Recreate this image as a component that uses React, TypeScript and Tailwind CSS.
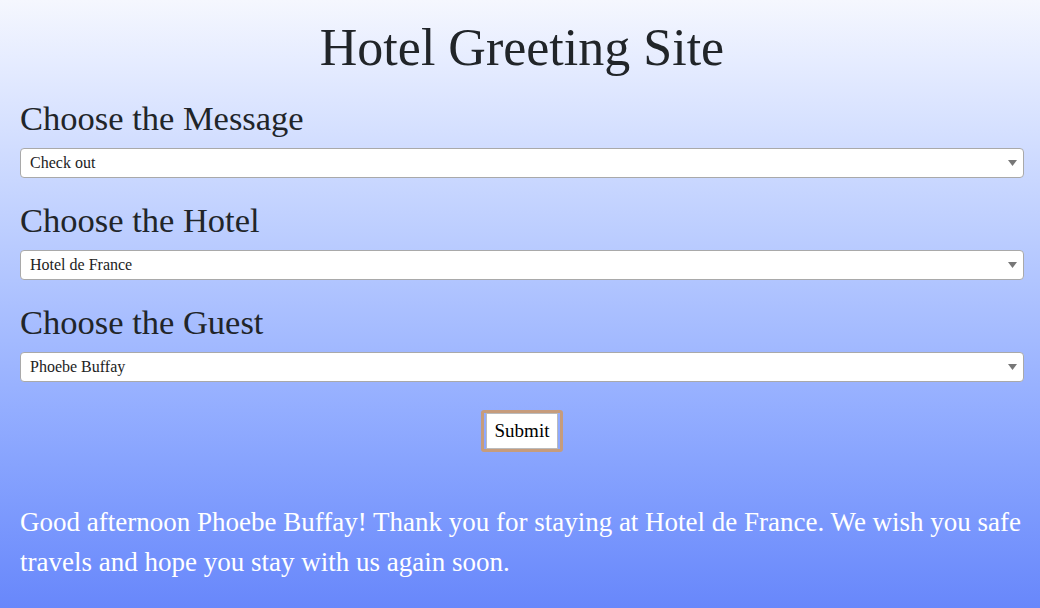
import React, { useState } from 'react'

const serif = { fontFamily: '"Liberation Serif", "Times New Roman", serif' }

const messages = ['Check in', 'Check out']
const hotels = ['Hotel de France', 'The Grand Budapest', 'Hotel California']
const guests = ['Phoebe Buffay', 'Monica Geller', 'Chandler Bing']

function Picker({
  label,
  value,
  options,
  onChange,
}: {
  label: string
  value: string
  options: string[]
  onChange: (v: string) => void
}) {
  return (
    <div className="mb-[22px]">
      <h2 className="text-[34.5px] leading-[40px] text-[#212529] mb-[10px]">{label}</h2>
      <div className="relative">
        <select
          value={value}
          onChange={(e) => onChange(e.target.value)}
          className="w-full h-[30px] appearance-none bg-white border border-[#a9a9a9] rounded-[4px] pl-[9px] pr-8 text-[16px] text-[#222] outline-none"
          style={serif}
        >
          {options.map((o) => (
            <option key={o}>{o}</option>
          ))}
        </select>
        {/* dropdown caret */}
        <svg
          className="absolute right-[7px] top-[12px] pointer-events-none"
          width="9"
          height="6"
          viewBox="0 0 9 6"
        >
          <path d="M0 0 H9 L4.5 6 Z" fill="#777" />
        </svg>
      </div>
    </div>
  )
}

export default function App() {
  const [message, setMessage] = useState('Check out')
  const [hotel, setHotel] = useState('Hotel de France')
  const [guest, setGuest] = useState('Phoebe Buffay')

  const greeting = `Good afternoon ${guest}! Thank you for staying at ${hotel}. We wish you safe travels and hope you stay with us again soon.`

  return (
    <div
      className="min-h-[608px] w-full bg-gradient-to-b from-[#f5f7fe] to-[#6887fb] pl-5 pr-4 pt-[19px] pb-6"
      style={serif}
    >
      <h1 className="text-center text-[52px] leading-[58px] text-[#212529] mb-[21px]">
        Hotel Greeting Site
      </h1>

      <Picker label="Choose the Message" value={message} options={messages} onChange={setMessage} />
      <Picker label="Choose the Hotel" value={hotel} options={hotels} onChange={setHotel} />
      <Picker label="Choose the Guest" value={guest} options={guests} onChange={setGuest} />

      <div className="flex justify-center mt-[28px]">
        <button
          type="button"
          className="h-[42px] px-[2px] border-[3px] border-[#c69c7c] rounded-[3px] bg-transparent"
        >
          <span className="block h-full bg-white border border-[#bbb] px-[8px] text-[19px] leading-[34px] text-black">
            Submit
          </span>
        </button>
      </div>

      <p className="mt-[50px] text-[27px] leading-[40px] text-white">{greeting}</p>
    </div>
  )
}
